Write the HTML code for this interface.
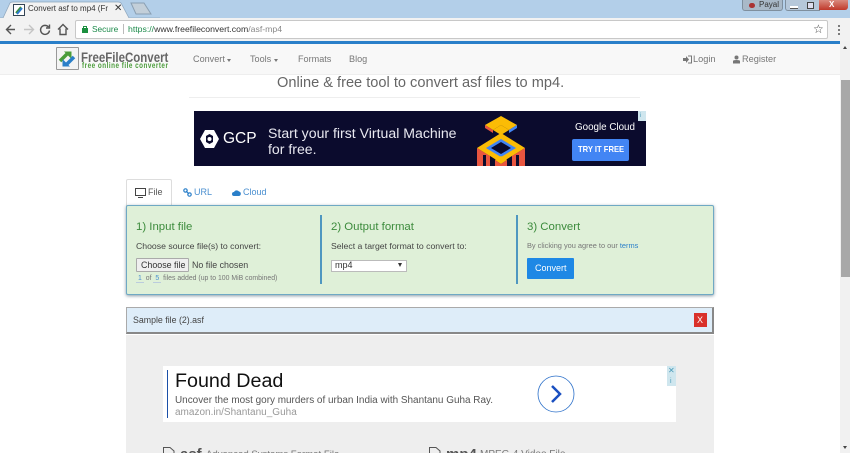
<!DOCTYPE html>
<html><head><meta charset="utf-8"><style>
html,body{margin:0;padding:0;background:#fff}
#p{position:relative;width:850px;height:453px;overflow:hidden;background:#fff;font-family:"Liberation Sans",sans-serif;color:#555}
#p div,#p span.a,#p svg.a{position:absolute}
.t{white-space:nowrap;line-height:1}
</style></head><body><div id="p">
<!-- chrome -->
<div style="left:0;top:0;width:850px;height:18px;background:#b3cfe9"></div>
<svg class="a" style="left:0;top:0" width="160" height="19"><path d="M0 18H3L10 3Q11 2 13 2H118Q120 2 121 3L129 18H160V19H0Z" fill="#f2f2f2" stroke="#8ea6bd" stroke-width=".7"/><path d="M131 3H144L151 14H136Z" fill="#c3cfd9" stroke="#8a9fb2"/></svg>
<svg class="a" style="left:13px;top:4px" width="12" height="12"><rect x=".5" y=".5" width="11" height="11" fill="#fff" stroke="#345"/><path d="M3 9L8 3" stroke="#3a8f3a" stroke-width="2"/><path d="M9 4L4 10" stroke="#2a78d0" stroke-width="2"/></svg>
<div class="t" style="left:28px;top:5px;font-size:8px;color:#333;width:80px;overflow:hidden">Convert asf to mp4 (Free</div>
<div class="t" style="left:114px;top:4px;font-size:10px;color:#333">✕</div>
<div style="left:0;top:18px;width:850px;height:23px;background:#f2f2f2"></div>
<svg class="a" style="left:4px;top:21px" width="66" height="17" fill="none" stroke-width="1.4"><path d="M11 8.500H3M7 4L2.500 8.500L7 13" stroke="#555"/><path d="M20 8.500H29M25 4L29.500 8.500L25 13" stroke="#c4c4c4"/><path d="M44.500 6A4.500 4.500 0 1 0 45.500 9.500M45.500 3.500V7H42" stroke="#555"/><path d="M54 8.500L59 3.500L64 8.500M56 7.500V13.500H62V7.500" stroke="#555"/></svg>
<div style="left:75px;top:20px;width:751px;height:17px;background:#fff;border:1px solid #c8c8c8;border-radius:2px"></div>
<svg class="a" style="left:81px;top:25px" width="8" height="9"><rect x="1" y="3" width="6" height="5" fill="#1b8f3f"/><path d="M2.500 3V1.500H5.500V3" stroke="#1b8f3f" fill="none"/></svg>
<div class="t" style="left:92px;top:25px;font-size:8.300px;color:#1b8a4a">Secure</div>
<div style="left:123px;top:24px;width:1px;height:10px;background:#bbb"></div>
<div class="t" style="left:128px;top:25px;font-size:8.700px;color:#333"><span style="color:#1b8a4a">https://</span>www.freefileconvert.com<span style="color:#888">/asf-mp4</span></div>
<div class="t" style="left:813px;top:23px;font-size:12px;color:#444">☆</div>
<svg class="a" style="left:837px;top:24px" width="4" height="12"><circle cx="2" cy="2" r="1" fill="#555"/><circle cx="2" cy="6" r="1" fill="#555"/><circle cx="2" cy="10" r="1" fill="#555"/></svg>
<!-- window controls -->
<div style="left:742px;top:0;width:39px;height:10px;background:#a9b9c8;border:1px solid #7f8f9e;border-top:0;border-radius:0 0 3px 3px"></div>
<div class="t" style="left:759px;top:1px;font-size:8px;color:#333">Payal</div>
<div style="left:749px;top:3px;width:6px;height:5px;background:#a33;border-radius:3px"></div>
<div style="left:785px;top:0;width:33px;height:10px;background:#b6c8da;border:1px solid #7f8f9e;border-top:0;border-radius:0 0 0 3px"></div>
<div style="left:790px;top:6px;width:8px;height:2px;background:#fff;border-bottom:1px solid #555"></div>
<div style="left:807px;top:2px;width:5px;height:5px;border:1px solid #444;background:#dde"></div>
<div style="left:819px;top:0;width:29px;height:10px;background:linear-gradient(#d98a7e,#c0392b);border-radius:0 0 3px 0"></div>
<div class="t" style="left:829px;top:1px;font-size:8px;font-weight:bold;color:#fff">X</div>
<!-- blue strip -->
<div style="left:0;top:41px;width:840px;height:3px;background:#2a7fc9"></div>
<div style="left:840px;top:41px;width:10px;height:3px;background:#f1f1f1"></div>
<!-- navbar -->
<div style="left:0;top:44px;width:840px;height:30px;background:#f8f8f8;border-bottom:1px solid #eee"></div>
<div style="left:56px;top:47px;width:21px;height:21px;background:#f4f4f4;border:1px solid #999;border-radius:1px"></div>
<svg class="a" style="left:57px;top:48px" width="21" height="21" fill="none" stroke-width="3.500"><path d="M3 13L10 6" stroke="#4a9c3a"/><path d="M7 3.500H14.500V11Z" fill="#4a9c3a"/><path d="M17 9L10 16" stroke="#2a7fc9"/><path d="M13 18.500H5.500V11Z" fill="#2a7fc9"/></svg>
<div class="t" style="left:81px;top:51px;font-size:13.500px;font-weight:bold;color:#666;transform:scaleX(.85);transform-origin:0 0">FreeFileConvert</div>
<div class="t" style="left:82px;top:62px;font-size:7.800px;font-weight:bold;letter-spacing:.62px;color:#4a9c3a;transform:scaleX(.81);transform-origin:0 0">free online file converter</div>
<div class="t" style="left:193px;top:55px;font-size:9.100px;color:#777">Convert</div>
<div class="t" style="left:250px;top:55px;font-size:9.100px;color:#777">Tools</div>
<div style="left:227px;top:59px;border:2.500px solid transparent;border-top:3px solid #777;border-bottom:0"></div>
<div style="left:274px;top:59px;border:2.500px solid transparent;border-top:3px solid #777;border-bottom:0"></div>
<div class="t" style="left:298px;top:55px;font-size:9.100px;color:#777">Formats</div>
<div class="t" style="left:349px;top:55px;font-size:9.100px;color:#777">Blog</div>
<svg class="a" style="left:683px;top:55px" width="9" height="9"><path d="M0 3H3V1L6 4.500L3 8V6H0Z" fill="#777"/><path d="M5 1H8.500V8H5" fill="none" stroke="#777"/></svg>
<div class="t" style="left:693px;top:55px;font-size:9.200px;color:#777">Login</div>
<svg class="a" style="left:733px;top:55px" width="7" height="9"><circle cx="3.500" cy="2.500" r="2" fill="#777"/><path d="M0 8.500V6Q0 5 3.500 5T7 6V8.500Z" fill="#777"/></svg>
<div class="t" style="left:742px;top:55px;font-size:9.200px;color:#777">Register</div>
<!-- scrollbar -->
<div style="left:840px;top:44px;width:10px;height:409px;background:#f1f1f1"></div>
<div style="left:841px;top:80px;width:9px;height:197px;background:#a8a8a8"></div>
<div style="left:843px;top:46px;border:2.500px solid transparent;border-bottom:3px solid #444;border-top:0"></div>
<div style="left:843px;top:446px;border:2.500px solid transparent;border-top:3px solid #444;border-bottom:0"></div>
<!-- heading -->
<div class="t" style="left:277px;top:76px;font-size:14.600px;color:#666">Online &amp; free tool to convert asf files to mp4.</div>
<div style="left:189px;top:97px;width:451px;height:1px;background:#eee"></div>
<!-- GCP ad -->
<div style="left:194px;top:111px;width:452px;height:55px;background:#0b0b2d"></div>
<svg class="a" style="left:199px;top:129px" width="21" height="20"><path d="M6 1H15L20 10L15 19H6L1 10Z" fill="#fff"/><path d="M7 7L10.500 5L14 7V13L10.500 15L7 13Z" fill="#0b0b2d"/><circle cx="10.500" cy="10" r="2" fill="#fff"/></svg>
<div class="t" style="left:223px;top:131px;font-size:15.500px;color:#fff">GCP</div>
<div class="t" style="left:268px;top:126px;font-size:14.100px;color:#e8e8f0">Start your first Virtual Machine</div>
<div class="t" style="left:268px;top:142px;font-size:14.100px;color:#e8e8f0">for free.</div>
<svg class="a" style="left:477px;top:115px" width="48" height="51"><path d="M8 10L24 1L40 10L32 15L24 10L16 15Z" fill="#fbbc05"/><path d="M8 10V13L16 18V15Z" fill="#e8553f"/><path d="M40 10V13L32 18V15Z" fill="#4285f4"/><path d="M24 10L32 15L24 20L16 15Z" fill="#fbbc05"/><path d="M24 18L48 33L24 48L0 33Z" fill="#fbbc05"/><path d="M24 24L39 33L24 42L9 33Z" fill="#4285f4"/><path d="M24 27L34 33L24 39L14 33Z" fill="#0b0b2d"/><path d="M0 33V51H13V41Z" fill="#e8553f"/><path d="M48 33V51H35V41Z" fill="#e8553f"/><path d="M13 41L24 48L35 41V51H13Z" fill="#0b0b2d"/><path d="M24 41L30 45L24 49L18 45Z" fill="#fbbc05"/><path d="M18 45L24 49L30 45V51H18Z" fill="#e8553f"/><path d="M6 40H9V51H6ZM39 40H42V51H39Z" fill="#0b0b2d"/></svg>
<div class="t" style="left:575px;top:123px;font-size:9.800px;color:#fff">Google Cloud</div>
<div style="left:572px;top:139px;width:57px;height:22px;background:#4285f4;border-radius:2px"></div>
<div class="t" style="left:578px;top:146px;font-size:8.200px;font-weight:bold;color:#fff;transform:scaleX(.93);transform-origin:0 0">TRY IT FREE</div>
<div style="left:638px;top:111px;width:8px;height:10px;background:#cfe6ee"></div>
<div class="t" style="left:640px;top:113px;font-size:6px;color:#4a9bb8">i</div>
<!-- tabs -->
<div style="left:126px;top:179px;width:44px;height:27px;background:#fff;border:1px solid #ddd;border-bottom:0;border-radius:2px 2px 0 0"></div>
<svg class="a" style="left:135px;top:188px" width="11" height="10"><rect x=".5" y=".5" width="10" height="7" fill="none" stroke="#444"/><path d="M3 9.500H8" stroke="#444"/></svg>
<div class="t" style="left:148px;top:188px;font-size:9px;color:#555">File</div>
<svg class="a" style="left:183px;top:188px" width="9" height="9" fill="none" stroke="#2a7fc9" stroke-width="1.200"><circle cx="2.500" cy="2.500" r="1.700"/><circle cx="6.500" cy="6.500" r="1.700"/><path d="M3 3L6 6"/></svg>
<div class="t" style="left:194px;top:188px;font-size:9px;color:#4a8fd0">URL</div>
<svg class="a" style="left:232px;top:189px" width="9" height="7"><path d="M2 7A2 2 0 0 1 2 3A3 3 0 0 1 7 2.500A2.300 2.300 0 0 1 7 7Z" fill="#2a7fc9"/></svg>
<div class="t" style="left:243px;top:188px;font-size:9px;color:#4a8fd0">Cloud</div>
<!-- green panel -->
<div style="left:126px;top:205px;width:586px;height:88px;background:#dff0d8;border:1px solid #6fa9c4;border-radius:2px;box-shadow:0 1px 3px rgba(60,90,110,.6)"></div>
<div style="left:320px;top:215px;width:2px;height:69px;background:#4f97c0"></div>
<div style="left:516px;top:215px;width:2px;height:69px;background:#4f97c0"></div>
<div class="t" style="left:136px;top:222px;font-size:11.400px;color:#3c8b3c">1) Input file</div>
<div class="t" style="left:136px;top:242px;font-size:8.700px;color:#444">Choose source file(s) to convert:</div>
<div style="left:136px;top:258px;width:51px;height:12px;background:#efefef;border:1px solid #aaa;border-radius:1px"></div>
<div class="t" style="left:141px;top:261px;font-size:8.900px;color:#333">Choose file</div>
<div class="t" style="left:192px;top:261px;font-size:8.900px;color:#444">No file chosen</div>
<div class="t" style="left:136px;top:276px;font-size:6.900px;color:#777"><span style="color:#4a8fd0;border-bottom:1px solid #bcd;padding:0 2px">1</span> of <span style="color:#4a8fd0;border-bottom:1px solid #bcd;padding:0 2px">5</span> files added (up to 100 MiB combined)</div>
<div class="t" style="left:331px;top:222px;font-size:11.400px;color:#3c8b3c">2) Output format</div>
<div class="t" style="left:331px;top:242px;font-size:8.700px;color:#444">Select a target format to convert to:</div>
<div style="left:331px;top:260px;width:74px;height:10px;background:#fff;border:1px solid #bbb"></div>
<div class="t" style="left:335px;top:261px;font-size:9px;color:#333">mp4</div>
<div style="left:398px;top:263px;border:2.500px solid transparent;border-top:4px solid #333;border-bottom:0"></div>
<div class="t" style="left:527px;top:222px;font-size:11.400px;color:#3c8b3c">3) Convert</div>
<div class="t" style="left:527px;top:242px;font-size:7.400px;color:#777">By clicking you agree to our <span style="color:#2a7fc9">terms</span></div>
<div style="left:527px;top:258px;width:47px;height:21px;background:#1e88e5;border-radius:1px"></div>
<div class="t" style="left:535px;top:264px;font-size:9px;color:#fff">Convert</div>
<!-- sample file -->
<div style="left:126px;top:307px;width:585px;height:24px;background:#deedf9;border:1px solid #aaa;border-bottom:2px solid #888;border-right:2px solid #888"></div>
<div class="t" style="left:133px;top:316px;font-size:8.800px;color:#444">Sample file (2).asf</div>
<div style="left:694px;top:313px;width:13px;height:14px;background:#d9312b"></div>
<div class="t" style="left:697px;top:316px;font-size:9px;color:#fff">X</div>
<!-- gray area -->
<div style="left:126px;top:335px;width:588px;height:118px;background:#eee"></div>
<div style="left:163px;top:366px;width:513px;height:56px;background:#fff"></div>
<div style="left:167px;top:370px;width:1px;height:48px;background:#1a4fa8"></div>
<div class="t" style="left:175px;top:372px;font-size:19.700px;color:#111">Found Dead</div>
<div class="t" style="left:175px;top:396px;font-size:9.950px;color:#555">Uncover the most gory murders of urban India with Shantanu Guha Ray.</div>
<div class="t" style="left:175px;top:408px;font-size:10px;color:#999">amazon.in/Shantanu_Guha</div>
<svg class="a" style="left:537px;top:375px" width="38" height="38" fill="none"><circle cx="19" cy="19" r="18" stroke="#2a6fc9" stroke-width=".8"/><path d="M15 11L23 19L15 27" stroke="#1a4fc0" stroke-width="2.500"/></svg>
<div style="left:667px;top:366px;width:9px;height:10px;background:#cfe6ee"></div>
<div class="t" style="left:668px;top:367px;font-size:8px;color:#4a9bb8">✕</div>
<div style="left:667px;top:376px;width:9px;height:10px;background:#cfe6ee"></div>
<div class="t" style="left:670px;top:378px;font-size:7px;color:#4a9bb8">i</div>
<!-- bottom -->
<svg class="a" style="left:163px;top:447px" width="12" height="6" fill="none" stroke="#555"><path d="M.5 6V.500H7L11 4V6"/></svg>
<div class="t" style="left:180px;top:447px;font-size:15px;font-weight:bold;color:#555">asf</div>
<div class="t" style="left:206px;top:450px;font-size:9.600px;color:#777">Advanced Systems Format File</div>
<svg class="a" style="left:429px;top:447px" width="12" height="6" fill="none" stroke="#555"><path d="M.5 6V.500H7L11 4V6"/></svg>
<div class="t" style="left:446px;top:447px;font-size:15px;font-weight:bold;color:#555">mp4</div>
<div class="t" style="left:480px;top:450px;font-size:10px;color:#777">MPEG-4 Video File</div>
</div></body></html>
